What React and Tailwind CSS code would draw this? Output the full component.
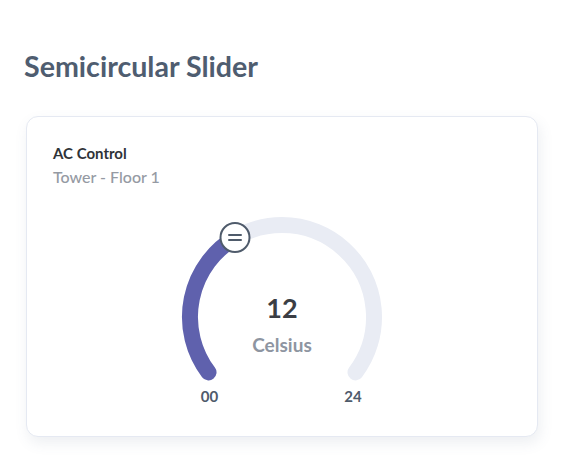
const Gauge = () => {
  // center (110,110), r=92; track 217deg -> -37deg, value handle at 120deg
  return (
    <svg width="220" height="202" viewBox="0 0 220 202" className="mx-auto block">
      <path
        d="M 36.5 165.4 A 92 92 0 1 1 183.5 165.4"
        fill="none"
        stroke="#e9ecf4"
        strokeWidth="16"
        strokeLinecap="round"
      />
      <path
        d="M 36.5 165.4 A 92 92 0 0 1 64 30.3"
        fill="none"
        stroke="#5f61ad"
        strokeWidth="16"
        strokeLinecap="round"
      />
      <circle cx="63" cy="30.5" r="14.5" fill="#fff" stroke="#4f5b6b" strokeWidth="2" />
      <line x1="57" y1="28" x2="69" y2="28" stroke="#4f5b6b" strokeWidth="2" strokeLinecap="round" />
      <line x1="57" y1="33" x2="69" y2="33" stroke="#4f5b6b" strokeWidth="2" strokeLinecap="round" />
      <text x="110" y="111" textAnchor="middle" fontFamily="Lato, sans-serif" fontWeight="700" fontSize="27" fill="#3b3e44">
        12
      </text>
      <text x="110" y="145" textAnchor="middle" fontFamily="Lato, sans-serif" fontWeight="700" fontSize="19" fill="#8e95a1">
        Celsius
      </text>
      <text x="37.5" y="195" textAnchor="middle" fontFamily="Lato, sans-serif" fontWeight="700" fontSize="15" fill="#4f5b6b">
        00
      </text>
      <text x="181" y="195" textAnchor="middle" fontFamily="Lato, sans-serif" fontWeight="700" fontSize="15" fill="#4f5b6b">
        24
      </text>
    </svg>
  );
};

export default function App() {
  return (
    <div className="min-h-screen bg-white px-[24px] pt-[49px] font-['Lato',sans-serif]">
      <h2 className="text-[28.6px] leading-[34px] font-bold text-[#4f5d70]">
        Semicircular Slider
      </h2>
      <div className="mt-[33px] ml-[2px] w-[512px] h-[321px] rounded-[12px] border border-[#e5e9f2] bg-white shadow-[2px_6px_14px_rgba(82,100,132,0.1)] px-[26px] pt-[26px]">
        <h6 className="text-[15px] leading-[20px] font-bold text-[#2f3338]">AC Control</h6>
        <p className="mt-[4px] text-[16px] leading-[20px] font-medium text-[#959aa3]">Tower - Floor 1</p>
        <div className="mt-[20px]">
          <Gauge />
        </div>
      </div>
    </div>
  );
}
